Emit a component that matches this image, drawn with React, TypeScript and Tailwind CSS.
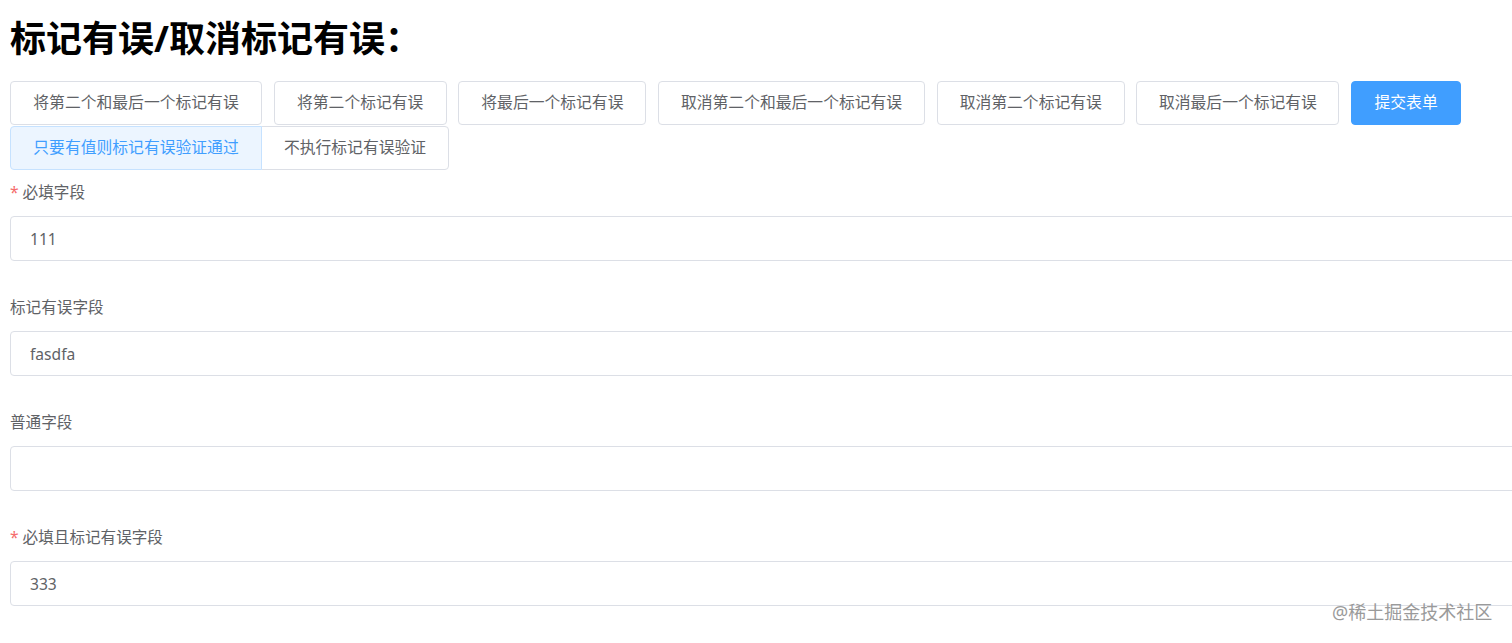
import { useState } from "react";

const font = "font-['Noto_Sans','Noto_Sans_CJK_SC',sans-serif]";

const markButtons = [
  { label: "将第二个和最后一个标记有误", w: "w-[252px]" },
  { label: "将第二个标记有误", w: "w-[173px]" },
  { label: "将最后一个标记有误", w: "w-[188px]" },
  { label: "取消第二个和最后一个标记有误", w: "w-[267px]" },
  { label: "取消第二个标记有误", w: "w-[188px]" },
  { label: "取消最后一个标记有误", w: "w-[203px]" },
];

const fields = [
  { label: "必填字段", required: true, value: "111" },
  { label: "标记有误字段", required: false, value: "fasdfa" },
  { label: "普通字段", required: false, value: "" },
  { label: "必填且标记有误字段", required: true, value: "333" },
];

export default function App() {
  const [mode, setMode] = useState(0);

  return (
    <div className={`relative w-[1512px] h-[643px] overflow-hidden bg-white ${font}`}>
      <div className="pl-[10px] pt-[16px]">
        <h1 className="text-[36px] leading-[46px] font-bold text-black">标记有误/取消标记有误：</h1>

        {/* action buttons */}
        <div className="mt-[19px] flex gap-[11.7px]">
          {markButtons.map((b) => (
            <button
              key={b.label}
              className={`${b.w} h-[44px] shrink-0 rounded-[4px] border border-[#dcdfe6] bg-white text-[15.8px] leading-none text-[#606266] text-center`}
            >
              {b.label}
            </button>
          ))}
          <button className="w-[110px] h-[44px] shrink-0 rounded-[4px] border border-[#409eff] bg-[#409eff] text-[15.8px] leading-none text-white">
            提交表单
          </button>
        </div>

        {/* validation mode group */}
        <div className="mt-px flex">
          {["只要有值则标记有误验证通过", "不执行标记有误验证"].map((t, i) => (
            <button
              key={t}
              onClick={() => setMode(i)}
              className={`h-[44px] shrink-0 border text-[15.8px] leading-none ${
                i === 0 ? "w-[252px] rounded-l-[4px]" : "w-[188px] rounded-r-[4px] -ml-px"
              } ${
                mode === i
                  ? "relative z-10 border-[#c6e2ff] bg-[#ecf5ff] text-[#409eff]"
                  : "border-[#dcdfe6] bg-white text-[#606266]"
              }`}
            >
              {t}
            </button>
          ))}
        </div>

        {/* form */}
        <div className="mt-[8px] w-[1540px]">
          {fields.map((f) => (
            <div key={f.label} className="mb-[32px]">
              <div className="h-[30px] mb-[8px] flex items-center text-[15.6px] text-[#606266]">
                {f.required && <span className="mr-[4px] text-[#f56c6c]">*</span>}
                {f.label}
              </div>
              <input
                defaultValue={f.value}
                className="block w-full h-[45px] rounded-[4px] border border-[#dcdfe6] bg-white pl-[19px] text-[15.6px] text-[#606266] outline-none"
              />
            </div>
          ))}
        </div>
      </div>

      <div className="absolute left-[1332px] top-[600px] text-[18px] leading-[24px] text-[#9a9a9a]">
        @稀土掘金技术社区
      </div>
    </div>
  );
}
